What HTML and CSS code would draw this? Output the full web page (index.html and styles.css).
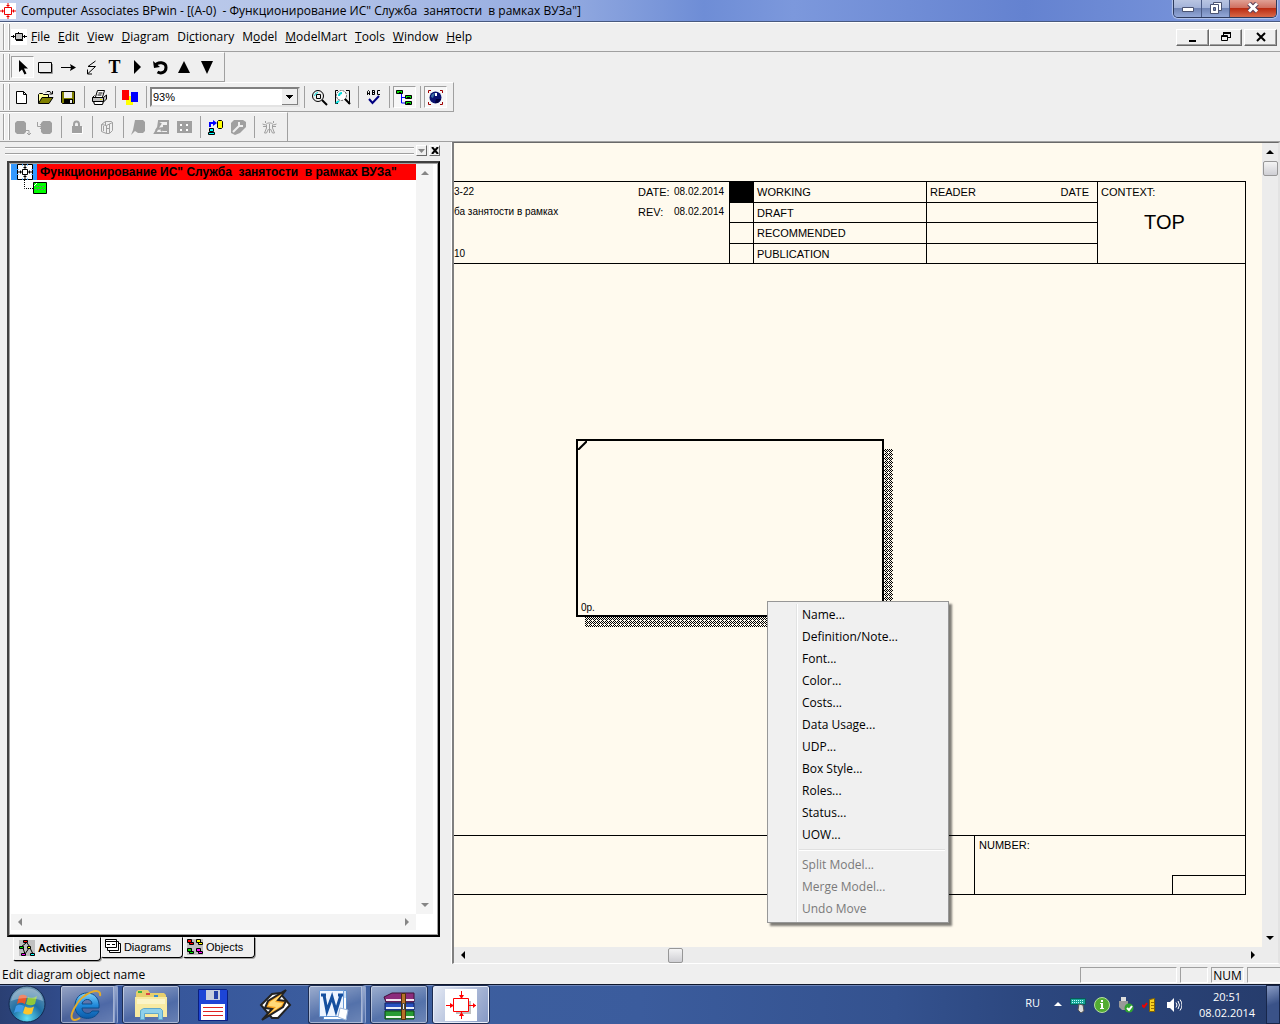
FILE: index.html
```html
<!DOCTYPE html>
<html lang="ru">
<head>
    <meta charset="UTF-8">
    <meta name="viewport" content="width=device-width, initial-scale=1.0">
    <title>Computer Associates BPwin</title>
    <link rel="stylesheet" href="styles.css">
</head>
<body>
    <header class="titlebar">
        <svg class="app-icon" width="16" height="16" viewBox="0 0 16 16"><path fill="#fff" d="M0 0h16v16H0z"/><path fill="none" stroke="#e00" d="M4.500 4.500h7v7h-7zM8 0v4M8 12v4M0 8h4M12 8h4M6.500 2.500h3M6.500 13.500h3M2.500 6.500v3M13.500 6.500v3"/></svg>
        <h1 class="title">Computer Associates BPwin - [(A-0)  - Функционирование ИС" Служба  занятости  в рамках ВУЗа"]</h1>
        <div class="win-buttons">
            <button class="win-btn" aria-label="Minimize"><svg width="14" height="12" viewBox="0 0 14 12"><path fill="#fff" stroke="#4b5473" d="M1.500 5.500h11v4h-11z"/></svg></button>
            <button class="win-btn" aria-label="Restore"><svg width="14" height="12" viewBox="0 0 14 12"><path fill="#fff" stroke="#4b5473" d="M4.500.500h8v8h-8z"/><path fill="#fff" stroke="#4b5473" d="M1.500 2.500h8v9h-8z"/><path fill="#7386b5" stroke="#4b5473" d="M4.500 5.500h2v3h-2z"/></svg></button>
            <button class="win-btn close" aria-label="Close"><svg width="14" height="12" viewBox="0 0 14 12"><path fill="none" stroke="#59405a" stroke-width="5" d="M3 1.500l8 8M11 1.500l-8 8"/><path fill="none" stroke="#fff" stroke-width="3" d="M3 1.500l8 8M11 1.500l-8 8"/></svg></button>
        </div>
    </header>

    <nav class="menubar">
        <span class="grip"></span>
        <svg class="doc-icon" width="16" height="16" viewBox="0 0 16 16"><path fill="#fff" d="M0 0h16v16H0z"/><path fill="#c0c0c0" stroke="#000" d="M4.500 4.500h7v6h-7z"/><path stroke="#000" fill="none" d="M0 7.500h4M12 7.500h4M5 11.500h7M2.500 6v3M13.500 6v3M7.500 3v2"/></svg>
        <a href="#"><u>F</u>ile</a>
        <a href="#"><u>E</u>dit</a>
        <a href="#"><u>V</u>iew</a>
        <a href="#"><u>D</u>iagram</a>
        <a href="#">Di<u>c</u>tionary</a>
        <a href="#">M<u>o</u>del</a>
        <a href="#"><u>M</u>odelMart</a>
        <a href="#"><u>T</u>ools</a>
        <a href="#"><u>W</u>indow</a>
        <a href="#"><u>H</u>elp</a>
        <div class="mdi-buttons">
            <button aria-label="Minimize document"><svg width="12" height="12" viewBox="0 0 12 12"><path d="M2 9h7v2H2z"/></svg></button>
            <button aria-label="Restore document"><svg width="12" height="12" viewBox="0 0 12 12"><path fill="none" stroke="#000" d="M4 1.500h7M3.500 4V1M10.500 1v6M3 2.500h8M8 6.500h3M1.500 4.500h6v5h-6zM1 5.500h7"/></svg></button>
            <button class="gap" aria-label="Close document"><svg width="12" height="12" viewBox="0 0 12 12"><path fill="none" stroke="#000" stroke-width="2" d="M2 2l8 8M10 2l-8 8"/></svg></button>
        </div>
    </nav>

    <div class="toolbars">
        <div class="toolbar">
            <span class="grip"></span>
            <button class="tool pressed" aria-label="Pointer"><svg width="17" height="17" viewBox="0 0 17 17"><path d="M5 1v12l3-2.500 2.500 5 2-1-2.500-5h4z"/></svg></button>
            <button class="tool" aria-label="Activity box"><svg width="17" height="17" viewBox="0 0 17 17"><path fill="none" stroke="#999" d="M3 14.500h12.500V5"/><path fill="none" stroke="#000" d="M1.500 3.500h13v10h-13z"/></svg></button>
            <button class="tool" aria-label="Arrow"><svg width="17" height="17" viewBox="0 0 17 17"><path stroke="#000" d="M1 8.500h12"/><path d="M10 5l6 3.500-6 3.500 1-3.500z"/></svg></button>
            <button class="tool" aria-label="Squiggle"><svg width="17" height="17" viewBox="0 0 17 17"><path fill="none" stroke="#000" d="M12.500 2L5 7.500h7.500L5 14.500M4.500 10.500v4.500H9"/></svg></button>
            <button class="tool text-tool" aria-label="Text">T</button>
            <button class="tool" aria-label="Go to"><svg width="17" height="17" viewBox="0 0 17 17"><path d="M5 1v14l7-7z"/></svg></button>
            <button class="tool" aria-label="Sibling diagram"><svg width="17" height="17" viewBox="0 0 17 17"><path fill="none" stroke="#000" stroke-width="3" d="M3 6.500C6 2 14 3 14 8.500c0 5-5 6.500-8.500 4.500"/><path d="M1 2l1 7 6-1z"/></svg></button>
            <button class="tool" aria-label="Go to parent"><svg width="17" height="17" viewBox="0 0 17 17"><path d="M9 2l6 12H3z"/></svg></button>
            <button class="tool" aria-label="Go to child"><svg width="17" height="17" viewBox="0 0 17 17"><path d="M3 2h12L9 15z"/></svg></button>
        </div>

        <div class="toolbar">
            <span class="grip"></span>
            <button class="tool" aria-label="New"><svg width="17" height="17" viewBox="0 0 17 17"><path fill="#fff" stroke="#000" d="M2.500 2.500h7l3 3v9h-10zM9.500 2.500v3h3"/></svg></button>
            <button class="tool" aria-label="Open"><svg width="17" height="17" viewBox="0 0 17 17"><path fill="#ff9" stroke="#000" d="M1.500 14V5.500l1-1h3l1 1h5v3"/><path fill="#808000" stroke="#000" d="M1.500 14.500l3.500-6h11l-4 6z"/><path fill="none" stroke="#000" d="M9 3.500l1-1h3l1.500 2M15.500 2v3h-3"/></svg></button>
            <button class="tool" aria-label="Save"><svg width="17" height="17" viewBox="0 0 17 17"><path fill="#808000" stroke="#000" d="M1.500 2.500h13v12h-12l-1-1z"/><path fill="#efefef" d="M4 3h8v6H4z"/><path d="M4 10h9v5H4z"/><path fill="#efefef" d="M10 11h2v3h-2z"/></svg></button>
            <span class="sep"></span>
            <button class="tool" aria-label="Print"><svg width="17" height="17" viewBox="0 0 17 17"><path fill="#fff" stroke="#000" d="M4.500 8l2-6.500h7L11.500 8"/><path fill="none" stroke="#000" d="M7.500 4h4M6.500 6h4"/><path fill="#c0c0c0" stroke="#000" d="M1.500 8.500l2-2M1.500 8.500h11v4h-11zM12.500 8.500l3-2.500v4l-3 3M2.500 12.500l1 3h8l1-3"/><path fill="#fff" d="M4 13h7v2H4z"/><path fill="#dd0" d="M9 10h2v1H9z"/></svg></button>
            <span class="sep"></span>
            <button class="tool" aria-label="Colors"><svg width="17" height="17" viewBox="0 0 17 17"><path fill="#ff0" d="M4 7h7v9H4z"/><path fill="#f00" d="M0 1h7v10H0z"/><path fill="#00f" d="M9 3h7v10H9z"/></svg></button>
            <span class="sep"></span>
            <select class="zoom" aria-label="Zoom"><option>93%</option></select>
            <span class="sep"></span>
            <button class="tool" aria-label="Zoom in"><svg width="17" height="17" viewBox="0 0 17 17"><circle cx="7" cy="7" r="5.500" fill="#efefef" stroke="#000"/><path fill="none" stroke="#0dd" d="M3.500 7A4 4 0 0 1 7 3.500"/><path fill="none" stroke="#000" d="M5.500 5.500h4v4h-4z"/><path stroke="#000" stroke-width="2" d="M11 11l5 5"/></svg></button>
            <button class="tool" aria-label="Fit to window"><svg width="17" height="17" viewBox="0 0 17 17"><path fill="none" stroke="#000" d="M4 1.500H1.500v13H4M12 1.500h3.500v13H14"/><circle cx="7.500" cy="6.500" r="5" fill="#fff" stroke="#555" stroke-dasharray="2 1"/><path fill="none" stroke="#0dd" stroke-width="2" d="M5 7A3 3 0 0 1 8 4M5 12l-3 2"/><path stroke="#000" stroke-width="2" d="M11 10l5 5"/></svg></button>
            <span class="sep"></span>
            <button class="tool" aria-label="Spelling"><svg width="17" height="17" viewBox="0 0 17 17"><path fill="none" stroke="#000" d="M2.500 6V2.500L3.500 1.500l1 1V6M2 4.500h3M7.500 1v5M7 1.500h2.500v4H7M7 3.500h2M15 1.500h-2.500v4H15"/><path fill="none" stroke="#000080" stroke-width="2" d="M4 10l3.500 4L14 7"/></svg></button>
            <span class="sep"></span>
            <button class="tool pressed" aria-label="Model explorer"><svg width="17" height="17" viewBox="0 0 17 17"><path fill="none" stroke="#00f" d="M5.500 5v9h5M5.500 8.500h4"/><path fill="#0d0" stroke="#000" d="M.500 1.500h6v3h-6zM9.500 6.500h6v3h-6zM9.500 12.500h6v3h-6z"/><path stroke="#000" d="M3 3.500h2M11 8.500h3M11 14.500h3"/></svg></button>
            <span class="sep"></span>
            <button class="tool pressed" aria-label="ModelMart"><svg width="17" height="17" viewBox="0 0 17 17"><path fill="none" stroke="#a00000" d="M1.500 4V1.500H4M13 1.500h2.500V4M1.500 13v2.500H4M13 15.500h2.500V13"/><circle cx="8.500" cy="8.500" r="6" fill="#0a1270"/><path fill="#3b6ea5" d="M4 8c0-3 2-4 4-4L6 9z"/><path fill="#fff" d="M8 4h2v3H8z"/><path fill="#000040" d="M9 10h5l-3 4H8z"/></svg></button>
        </div>

        <div class="toolbar">
            <span class="grip"></span>
            <button class="tool" disabled aria-label="Check out"><svg width="17" height="17" viewBox="0 0 17 17"><path fill="#a0a0a0" d="M3 2h7l2 2v9l-2 2H3l-2-2V4z"/><path fill="none" stroke="#a0a0a0" d="M11 11.500h4v4M13 14l2 2 2-2"/></svg></button>
            <button class="tool" disabled aria-label="Check in"><svg width="17" height="17" viewBox="0 0 17 17"><path fill="#a0a0a0" d="M6 2h7l2 2v9l-2 2H6l-2-2V4z"/><path fill="none" stroke="#a0a0a0" d="M.500 3v4.500H5M3 5l2 2.500L3 10"/></svg></button>
            <span class="sep"></span>
            <button class="tool" disabled aria-label="Lock"><svg width="17" height="17" viewBox="0 0 17 17"><path fill="none" stroke="#fff" d="M4 14.500h10.500V8"/><path fill="none" stroke="#a0a0a0" stroke-width="2" d="M6 8V5.500c0-4 5-4 5 0V8"/><path fill="#a0a0a0" d="M4 7h10v7H4z"/></svg></button>
            <span class="sep"></span>
            <button class="tool" disabled aria-label="Versions"><svg width="17" height="17" viewBox="0 0 17 17"><path fill="none" stroke="#a0a0a0" d="M2.500 5.500l4-3h6l1 1v8l-3 3h-3l-5-2zM6.500 2.500v4M2.500 5.500l5 1v8M7.500 6.500l6-3M10.500 5v9M4.500 7v5M8 9.500h2"/></svg></button>
            <span class="sep"></span>
            <button class="tool" disabled aria-label="Refresh"><svg width="17" height="17" viewBox="0 0 17 17"><path fill="#a0a0a0" d="M5 1h8l2 2v9l-2 2H8l-3-2-4 4 2-5z"/></svg></button>
            <button class="tool" disabled aria-label="Review"><svg width="17" height="17" viewBox="0 0 17 17"><path fill="none" stroke="#a0a0a0" stroke-width="2" d="M6 2h9v12H2l3-5zM8 4l-4 6 7-1-3 3"/><path fill="#a0a0a0" d="M10 6h4v6h-4z"/></svg></button>
            <button class="tool" disabled aria-label="Library"><svg width="17" height="17" viewBox="0 0 17 17"><path fill="#a0a0a0" d="M1 2h15v12H1z"/><path fill="#fff" d="M4 5h2v2H4zM10 5h2v2h-2zM4 10h2v2H4zM10 10h2v2h-2z"/></svg></button>
            <span class="sep"></span>
            <button class="tool" aria-label="Connect"><svg width="17" height="17" viewBox="0 0 17 17"><path fill="none" stroke="#00f" stroke-width="2" d="M3 8V4h4"/><path fill="#00f" d="M6 1l4 3-4 3z"/><path fill="#ff0" stroke="#000" d="M10.500 2.500l1-1h3l1 1v6l-1 1h-3l-1-1z"/><path fill="#0ff" stroke="#000" d="M2.500 9.500h4v3h-4zM1.500 13.500h6v2h-6z"/></svg></button>
            <button class="tool" disabled aria-label="Tools"><svg width="17" height="17" viewBox="0 0 17 17"><path fill="#a0a0a0" d="M4 1h9l3 2v5l-6 6-5 2-4-2V4z"/><path fill="none" stroke="#efefef" stroke-width="2" d="M3 13l7-7M9 3v4h4"/></svg></button>
            <span class="sep"></span>
            <button class="tool" disabled aria-label="Users"><svg width="17" height="17" viewBox="0 0 17 17"><path fill="none" stroke="#a0a0a0" d="M1.500 5l3 1 2-2h4l2 2 3-1M5.500 6v3l-2 5h2l2-4M11.500 6v3l2 5h-2l-2-4M8.500 5v9M4.500 2v2M12.500 2v2M2 7.500h3M12 7.500h3"/></svg></button>
        </div>
    </div>

    <main class="workspace">
        <aside class="explorer">
            <div class="dock-bar">
                <span class="dock-grip"></span>
                <button class="dock-btn" disabled aria-label="Collapse"><svg width="7" height="4" viewBox="0 0 7 4"><path fill="#888" d="M0 0h7L3.500 4z"/></svg></button>
                <button class="dock-btn" aria-label="Close panel"><svg width="8" height="7" viewBox="0 0 8 7"><path fill="none" stroke="#000" stroke-width="2" d="M1 0l6 7M7 0L1 7"/></svg></button>
            </div>
            <div class="tree-frame">
                <div class="tree">
                    <div class="tree-root">
                        <span class="tree-sel"><svg width="16" height="16" viewBox="0 0 16 16"><path fill="#fff" stroke="#000" d="M.500.500h15v15H.500z"/><path fill="none" stroke="#3399ff" stroke-width="2" d="M5 .500h1M10 .500h1M5 15.500h1M10 15.500h1M.500 5v1M.500 10v1M15.500 5v1M15.500 10v1"/><path fill="none" stroke="#000" d="M5.500 5.500h5v5h-5zM8 0v5M8 11v5M0 8h5M11 8h5M6.500 3.500h3M6.500 12.500h3M3.500 6.500v3M12.500 6.500v3"/></svg></span>
                        <span class="tree-label">Функционирование ИС" Служба  занятости  в рамках ВУЗа"</span>
                    </div>
                    <svg class="tree-child" width="34" height="16" viewBox="0 0 34 16"><path fill="none" stroke="#000" stroke-dasharray="1 1" d="M2.500 0v8.500H11"/><path fill="#0f0" stroke="#000" d="M11.500 2.500h13v11h-13z"/><path stroke="#7a7a7a" stroke-dasharray="2 1" d="M14 6.500h9M13 9.500h10"/><path stroke="#fff" d="M12 6l3-3"/></svg>
                </div>
                <div class="scroll-v faded"><svg width="8" height="4" viewBox="0 0 8 4"><path d="M4 0l4 4H0z"/></svg><svg width="8" height="4" viewBox="0 0 8 4"><path d="M0 0h8L4 4z"/></svg></div>
                <div class="scroll-h faded"><svg width="4" height="8" viewBox="0 0 4 8"><path d="M4 0v8L0 4z"/></svg><svg width="4" height="8" viewBox="0 0 4 8"><path d="M0 0l4 4-4 4z"/></svg></div>
            </div>
            <div class="tabs">
                <button class="tab active"><svg width="16" height="16" viewBox="0 0 16 16"><path fill="#c0c0c0" d="M0 0h16v16H0z"/><path fill="none" stroke="#000" d="M7 3L2 7M8 3l3 4M4 8l2 6M10 8l-4 6M11 8l3 6"/><path fill="#f00" stroke="#000" d="M4.500.500h4v2h-4z"/><path fill="#0d0" stroke="#000" d="M.500 6.500h4v2h-4z"/><path fill="#ff0" stroke="#000" d="M8.500 6.500h3v2h-3z"/><path fill="#f0f" stroke="#000" d="M2.500 13.500h4v2h-4z"/><path fill="#0ff" stroke="#000" d="M11.500 13.500h4v2h-4z"/></svg>Activities</button>
                <button class="tab"><svg width="16" height="16" viewBox="0 0 16 16"><path fill="#fff" stroke="#000" d="M4.500 4.500h11v9h-11z"/><path fill="#fff" stroke="#000" d="M2.500 2.500h11v9h-11z"/><path fill="#fff" stroke="#000" d="M.500.500h11v8H.500z"/><path stroke="#000" d="M1 2.500h11M2 5.500h3M7 5.500h3"/></svg>Diagrams</button>
                <button class="tab"><svg width="16" height="16" viewBox="0 0 16 16"><path fill="#c0c0c0" d="M0 0h16v16H0z"/><path fill="#f00" stroke="#000" d="M.500.500h4v3h-4zM2.500 3.500h4v2h-4z"/><path fill="#ff0" stroke="#000" d="M9.500.500h4v3h-4zM11.500 3.500h4v2h-4z"/><path fill="#0d0" stroke="#000" d="M.500 9.500h4v3h-4zM2.500 12.500h4v2h-4z"/><path fill="#f0f" stroke="#000" d="M9.500 9.500h4v3h-4zM11.500 12.500h4v2h-4z"/></svg>Objects</button>
            </div>
        </aside>

        <section class="document">
            <div class="canvas">
                <div class="sheet">
                    <div class="sheet-head">
                        <div class="head-info">
                            <span class="val">3-22</span><span>DATE:</span><span class="val">08.02.2014</span>
                            <span class="val">ба занятости в рамках</span><span>REV:</span><span class="val">08.02.2014</span>
                            <span class="last val">10</span>
                        </div>
                        <div class="status">
                            <i class="on"></i><span>WORKING</span>
                            <i></i><span>DRAFT</span>
                            <i></i><span>RECOMMENDED</span>
                            <i></i><span>PUBLICATION</span>
                        </div>
                        <div class="readers">
                            <div><span>READER</span><span>DATE</span></div>
                            <div></div>
                            <div></div>
                            <div></div>
                        </div>
                        <div class="context">CONTEXT:<strong>TOP</strong></div>
                    </div>
                    <div class="sheet-body"></div>
                    <div class="sheet-foot">
                        <div class="foot-title"></div>
                        <div class="foot-number">NUMBER:<i></i></div>
                    </div>
                </div>
                <svg class="activity-shadow" width="308" height="178" shape-rendering="crispEdges"><defs><pattern id="dots" width="4" height="4" patternUnits="userSpaceOnUse"><path d="M0 0h1v1H0zM2 0h1v1H2zM1 1h1v1H1zM3 1h1v1H3zM0 2h1v1H0zM2 2h1v1H2zM1 3h1v1H1z"/></pattern></defs><rect width="308" height="178" fill="url(#dots)"/></svg>
                <div class="activity">
                    <svg width="9" height="9" viewBox="0 0 9 9"><path stroke="#000" stroke-width="2" d="M0 9l9-9"/></svg>
                    <span class="val">0р.</span>
                </div>
            </div>
            <div class="scroll-v"><svg width="8" height="4" viewBox="0 0 8 4"><path d="M4 0l4 4H0z"/></svg><i class="thumb"></i><svg width="8" height="4" viewBox="0 0 8 4"><path d="M0 0h8L4 4z"/></svg></div>
            <div class="scroll-h"><svg width="4" height="8" viewBox="0 0 4 8"><path d="M4 0v8L0 4z"/></svg><i class="thumb"></i><svg width="4" height="8" viewBox="0 0 4 8"><path d="M0 0l4 4-4 4z"/></svg></div>
        </section>
    </main>

    <div class="context-menu">
        <button>Name...</button>
        <button>Definition/Note...</button>
        <button>Font...</button>
        <button>Color...</button>
        <button>Costs...</button>
        <button>Data Usage...</button>
        <button>UDP...</button>
        <button>Box Style...</button>
        <button>Roles...</button>
        <button>Status...</button>
        <button>UOW...</button>
        <hr>
        <button disabled>Split Model...</button>
        <button disabled>Merge Model...</button>
        <button disabled>Undo Move</button>
    </div>

    <footer class="statusbar">
        <span class="message">Edit diagram object name</span>
        <span class="pane wide"></span>
        <span class="pane"></span>
        <span class="pane num">NUM</span>
        <span class="pane last"></span>
    </footer>

    <div class="taskbar">
        <button class="start" aria-label="Start"><svg width="40" height="40" viewBox="0 0 40 40"><defs><radialGradient id="orb" cx="50%" cy="90%" r="85%"><stop offset="0" stop-color="#5fe0f5"/><stop offset=".5" stop-color="#1d6fa5"/><stop offset="1" stop-color="#6a93b0"/></radialGradient></defs><circle cx="20" cy="19" r="18" fill="url(#orb)" stroke="#12284e"/><path fill="#e8562a" d="M12 11c3-2 5-1.500 8 0l-2 8c-3-1.500-5-2-8 0z"/><path fill="#8fc83c" d="M21 12c3 1.500 6 1 9-1l-2 8c-3 2-6 1.500-9 0z"/><path fill="#3f9be8" d="M9 21c3-2 5-1.500 8 0l-2 7c-2-1.500-5-2-8 0z"/><path fill="#fdc52c" d="M18 21.500c3 1.500 6 2 9 0l-2 7c-3 2-6 1-9-.500z"/><path fill="#fff" fill-opacity=".3" d="M4 16C6-1 34-1 36 16c-10-4-22-4-32 0z"/></svg></button>
        <button class="task stacked" aria-label="Internet Explorer"><svg width="34" height="34" viewBox="0 0 34 34"><defs><linearGradient id="ie" x2="0" y2="1"><stop offset="0" stop-color="#7cd0fa"/><stop offset=".5" stop-color="#1f87d8"/><stop offset="1" stop-color="#0b5aa8"/></linearGradient></defs><path fill="url(#ie)" stroke="#0b4c8c" fill-rule="evenodd" d="M18 5c8 0 13 6 12 15H13c0 6 8 7 10 3h7c-4 11-24 10-24-5C6 10 11 5 18 5zM13 16h10c0-6-9-6-10 0z"/><path fill="none" stroke="#e3ab2c" stroke-width="2" d="M31 8c2-10-17-4-25 11-7 12-2 16 5 11"/></svg></button>
        <button class="task" aria-label="Explorer"><svg width="34" height="34" viewBox="0 0 34 34"><path fill="#e7cf6d" d="M2 4l2-2h10l2 3h14l2 2v22H2z"/><path fill="#3eb33e" d="M4 3h4v2H4z"/><path fill="#d44" d="M12 5h4v2h-4z"/><path fill="#3a8ed0" d="M20 7h4v2h-4z"/><path fill="#f8eaa2" d="M1 9h32v20H1z"/><path fill="#fbf4c8" d="M3 11h28v5H3z"/><path fill="#8fd0ea" stroke="#5fa8cc" d="M6.500 31.500v-9l3-2h17l2 2v9h-4v-6h-14v6z"/></svg></button>
        <button class="task plain" aria-label="Floppy"><svg width="34" height="34" viewBox="0 0 34 34"><path fill="#1d45d6" stroke="#0a1f80" d="M2.500 1.500h28l1 1v30h-29z"/><path fill="#c8cede" d="M10 2h14v10H10z"/><path fill="#2540a8" d="M18 3h4v8h-4z"/><path fill="#fff" d="M5 16h24v16H5z"/><path stroke="#d22" d="M7 19.500h20M7 23.500h20M7 27.500h20"/></svg></button>
        <button class="task plain" aria-label="Winamp"><svg width="34" height="34" viewBox="0 0 34 34"><path fill="#fff" stroke="#222" stroke-width="2" d="M3 17L14 6l8-1 10 12-12 13h-6z"/><path fill="#f6a01d" stroke="#222" stroke-width="2" d="M28 2L10 13l-3 7 7 1L4 32l21-13 3-6-8-1z"/><path fill="#ffd978" d="M24 6L12 14l-2 4 8 1-7 7 12-8 2-3-8-1z"/></svg></button>
        <button class="task stacked" aria-label="Word"><svg width="34" height="34" viewBox="0 0 34 34"><path fill="#fff" stroke="#5b8bc8" d="M6.500 2.500h23v29h-23z"/><path fill="#cfe0f5" d="M8 3h21v7H8z"/><path fill="#eef5ff" stroke="#6a9bd8" d="M2.500 2.500h24v26h-24z"/><path fill="none" stroke="#15509f" stroke-width="3" d="M4 7h5M7 7l3 16L15 9l4 14 5-16M21 7h5"/><path fill="#fff" stroke="#9bb4d8" d="M23 20l8 2-2 10-8-3z"/></svg></button>
        <button class="task" aria-label="WinRAR"><svg width="34" height="34" viewBox="0 0 34 34"><path fill="#8c2c7c" stroke="#401038" d="M2 9l8-4h22v9H4z"/><path fill="#f4e6f0" d="M4 11h28v2H4z"/><path fill="#2850c0" stroke="#102060" d="M3 15h29v7H3z"/><path fill="#e8ecf8" d="M4 19h28v2H4z"/><path fill="#289c34" stroke="#0c4814" d="M3 23h29v8H3z"/><path fill="#e8f8e8" d="M4 28h28v2H4z"/><path fill="#b87028" stroke="#50300c" d="M19.500 5.500h4v26h-4z"/><path fill="#eee" stroke="#444" d="M20.500 15.500h2v6h-2z"/></svg></button>
        <button class="task current" aria-label="BPwin"><svg width="34" height="34" viewBox="0 0 34 34"><path fill="#fff" d="M1 1h32v32H1z"/><path fill="#c0c0c0" d="M12 13h15v13H12z"/><path fill="#fff" stroke="#f00" d="M9.500 10.500h15v13h-15z"/><path stroke="#f00" d="M17.500 3v7M17.500 24v7M2 17.500h7M25 17.500h7"/><path fill="#f00" d="M15 7h5l-2.500 4zM15 28h5l-2.500-4zM6 15v5l4-2.500zM29 15v5l3-2.500z"/></svg></button>

        <div class="tray">
            <span class="lang">RU</span>
            <svg width="8" height="5" viewBox="0 0 8 5"><path fill="#fff" d="M4 0l4 4H0z"/></svg>
            <svg width="16" height="16" viewBox="0 0 16 16"><path fill="#16a596" stroke="#0a5a58" d="M.500 1.500h15v6H.500z"/><path stroke="#bff" stroke-dasharray="1 1" d="M2 3.500h12M2 5.500h12"/><path fill="#ddd" stroke="#555" d="M9 7l4 1 1 6-3 2-3-3z"/></svg>
            <svg width="16" height="16" viewBox="0 0 16 16"><circle cx="8" cy="8" r="7.500" fill="#52ac32" stroke="#b8e0a0"/><path fill="#fff" d="M7 3h2v2H7zM6 6h3v5h1v1H6v-1h1V7H6z"/></svg>
            <svg width="16" height="16" viewBox="0 0 16 16"><path fill="#ddd" d="M3 0h5v4H3z"/><path fill="#999" d="M1 4h9v6l-3 3H4l-3-3z"/><circle cx="11" cy="11" r="4.500" fill="#2fa52f"/><path fill="none" stroke="#fff" stroke-width="2" d="M9 11l2 2 3-4"/></svg>
            <svg width="16" height="16" viewBox="0 0 16 16"><path fill="#f8d020" stroke="#806000" d="M7.500 2.500l5-1v13h-5z"/><path fill="none" stroke="#a07000" d="M9 5.500h3M9 8.500h3M9 11.500h3"/><path fill="none" stroke="#e00" stroke-width="2" d="M0 8l2 2 3-4"/></svg>
            <svg width="16" height="16" viewBox="0 0 16 16"><path fill="#fff" d="M1 5h3l4-4v14l-4-4H1z"/><path fill="none" stroke="#fff" d="M10 5.500q2 2.500 0 5M12 4q3 4 0 8M14 2.500q4 5.500 0 11"/></svg>
            <div class="clock"><time>20:51</time><time>08.02.2014</time></div>
            <button class="show-desktop" aria-label="Show desktop"></button>
        </div>
    </div>
</body>
</html>
```
FILE: styles.css
```css
* {
    margin: 0;
    padding: 0;
    box-sizing: border-box;
}
body {
    font-family: "Open Sans", "Noto Sans", sans-serif;
    font-size: 12px;
    line-height: 16px;
    color: #000;
    background-color: #efefef;
    height: 100vh;
    display: flex;
    flex-direction: column;
    overflow: hidden;
    position: relative;
}
button {
    font: inherit;
    color: inherit;
    border: none;
    background: none;
}
svg {
    display: block;
    flex: none;
}
i {
    display: block;
}

/* title bar */
.titlebar {
    height: 22px;
    display: flex;
    align-items: flex-start;
    background: linear-gradient(90deg, #c3d0ec 0%, #b3c3e8 25%, #93aae0 44%, #6e8dd6 55%, #7c98dc 62%, #6482d0 80%, #7f9ade 100%);
    border-bottom: 1px solid #48597f;
    flex: none;
}
.app-icon {
    margin-top: 3px;
}
.title {
    flex: 1;
    font-size: 12px;
    font-weight: normal;
    white-space: pre;
    margin: 3px 0 0 5px;
}
.win-buttons {
    display: flex;
    height: 18px;
    margin-right: 3px;
    border: 1px solid #2d3a5c;
    border-top: none;
    border-radius: 0 0 5px 5px;
    overflow: hidden;
    box-shadow: 0 0 1px 1px #b9c8ec;
}
.win-btn {
    width: 28px;
    display: flex;
    justify-content: center;
    padding-top: 2px;
    background: linear-gradient(#b9c5e2 0%, #a3b3d9 45%, #7185b5 50%, #93a8d8 100%);
    border-right: 1px solid #4a5a85;
}
.win-btn.close {
    width: 46px;
    background: linear-gradient(#e0a094 0%, #d07060 45%, #bb2c12 50%, #d86848 100%);
    border-right: none;
}

/* menu */
.menubar {
    display: flex;
    align-items: center;
    height: 30px;
    border-top: 1px solid #fff;
    border-bottom: 1px solid #a0a0a0;
    padding-left: 3px;
    gap: 8px;
    flex: none;
}
.menubar a {
    color: #000;
    text-decoration: none;
}
.grip {
    width: 7px;
    align-self: stretch;
    margin: 1px 1px 1px 0;
    border: 1px solid #a0a0a0;
    border-width: 0 1px;
    box-shadow: inset 1px 0 #fff, inset -1px 0 #fff;
    flex: none;
}
.doc-icon {
    margin: 0 -4px 0 -8px;
}
.mdi-buttons {
    display: flex;
    margin: 0 3px 0 auto;
}
.mdi-buttons button {
    width: 33px;
    height: 17px;
    display: flex;
    align-items: center;
    justify-content: center;
    border: 1px solid;
    border-color: #fff #696969 #696969 #fff;
    box-shadow: inset -1px -1px #a0a0a0;
}
.mdi-buttons .gap {
    margin-left: 2px;
}

/* toolbars */
.toolbars {
    display: flex;
    flex-direction: column;
    align-items: flex-start;
    border-bottom: 1px solid #a0a0a0;
    flex: none;
}
.toolbar {
    display: flex;
    align-items: center;
    height: 30px;
    padding: 0 6px 0 3px;
    border-top: 1px solid #fff;
    border-right: 1px solid #a0a0a0;
    border-bottom: 1px solid #a0a0a0;
}
.toolbar:last-child {
    height: 29px;
    border-bottom: none;
}
.tool {
    width: 23px;
    height: 22px;
    display: flex;
    align-items: center;
    justify-content: center;
}
.tool.pressed {
    background-color: #f7f7f7;
    border: 1px solid;
    border-color: #a0a0a0 #fff #fff #a0a0a0;
}
.text-tool {
    font-family: "Liberation Serif", serif;
    font-size: 18px;
    font-weight: bold;
}
.sep {
    width: 1px;
    height: 22px;
    margin: 0 3px 0 4px;
    background-color: #a0a0a0;
}
.zoom {
    width: 150px;
    height: 20px;
    appearance: none;
    border: 2px solid;
    border-color: #808080 #e3e3e3 #e3e3e3 #808080;
    border-radius: 0;
    padding-left: 1px;
    font: 11px "Liberation Sans", sans-serif;
    color: #000;
    background: linear-gradient(#000, #000) no-repeat right 5px top 6px / 7px 1px,
        linear-gradient(#000, #000) no-repeat right 6px top 7px / 5px 1px,
        linear-gradient(#000, #000) no-repeat right 7px top 8px / 3px 1px,
        linear-gradient(#000, #000) no-repeat right 8px top 9px / 1px 1px,
        linear-gradient(#808080, #808080) no-repeat right 0 bottom 0 / 16px 1px,
        linear-gradient(#808080, #808080) no-repeat right 0 top 0 / 1px 16px,
        linear-gradient(#efefef, #efefef) no-repeat right 0 top 0 / 16px 16px,
        #fff;
}

/* work area */
.workspace {
    flex: 1;
    min-height: 0;
    display: flex;
}
.explorer {
    width: 452px;
    display: flex;
    flex-direction: column;
    padding: 3px 11px 3px 5px;
    border-right: 1px solid #fff;
    flex: none;
}
.dock-bar {
    display: flex;
    align-items: center;
    gap: 2px;
    height: 11px;
    margin-bottom: 5px;
}
.dock-grip {
    flex: 1;
    height: 7px;
    border: 1px solid #a0a0a0;
    border-width: 1px 0;
    box-shadow: inset 0 1px #fff, 0 1px #fff;
}
.dock-btn {
    width: 11px;
    height: 11px;
    display: flex;
    align-items: center;
    justify-content: center;
    border: 1px solid;
    border-color: #fff #696969 #696969 #fff;
}
.tree-frame {
    flex: 1;
    min-height: 0;
    margin-left: 2px;
    display: grid;
    grid-template-columns: 1fr 17px;
    grid-template-rows: 1fr 16px;
    background-color: #fff;
    border: 2px solid;
    border-color: #404040 #000 #000 #404040;
    outline: 1px solid #a0a0a0;
    outline-offset: -3px;
    padding: 1px 5px 5px 2px;
}
.tree-root {
    display: flex;
    height: 16px;
    background-color: #f00;
}
.tree-sel {
    width: 26px;
    padding-left: 6px;
    background-color: #3399ff;
}
.tree-label {
    font: bold 12px/16px "Liberation Sans", sans-serif;
    white-space: pre;
    padding-left: 3px;
}
.tree-child {
    margin-left: 11px;
}
.scroll-v,
.scroll-h {
    display: flex;
    align-items: center;
    justify-content: space-between;
    background-color: #ececec;
}
.scroll-v {
    flex-direction: column;
    padding: 7px 0;
}
.scroll-h {
    padding: 0 7px;
}
.faded {
    background-color: #f4f4f4;
}
.faded svg {
    opacity: .45;
}
.tabs {
    display: flex;
    align-items: flex-start;
    padding-left: 8px;
    font: 11px "Liberation Sans", sans-serif;
}
.tab {
    display: flex;
    align-items: center;
    gap: 3px;
    height: 21px;
    padding: 0 11px 2px 3px;
    border: 1px solid;
    border-color: transparent #000 #000 #fff;
    border-radius: 0 0 4px 2px;
    box-shadow: 1px 1px #a0a0a0;
}
.tab.active {
    height: 24px;
    font-weight: bold;
    padding: 0 13px 2px 5px;
}

.document {
    flex: 1;
    min-width: 0;
    display: grid;
    grid-template-columns: minmax(0, 1fr) 16px;
    grid-template-rows: minmax(0, 1fr) 16px;
    background-color: #ececec;
    border: 1px solid;
    border-color: #696969 #e3e3e3 #fff #808080;
    border-left-width: 2px;
    border-right-width: 2px;
}
.document .scroll-v {
    justify-content: flex-start;
}
.document .scroll-v svg:last-child {
    margin-top: auto;
}
.thumb {
    width: 15px;
    height: 15px;
    border: 1px solid #979797;
    border-radius: 2px;
    background: linear-gradient(#f4f4f4, #cfcfd4);
}
.scroll-v .thumb {
    margin-top: 7px;
}
.scroll-h .thumb {
    margin-right: 366px;
}
.canvas {
    position: relative;
    display: flex;
    overflow: hidden;
    background-color: #fffaee;
    font: 11px/14px "Liberation Sans", sans-serif;
}
.canvas .val {
    font-size: 10px;
}
.sheet {
    flex: 1;
    min-width: 0;
    display: flex;
    flex-direction: column;
    margin: 38px 16px 52px 0;
    border: 1px solid #000;
    border-left: none;
}
.sheet-head {
    display: flex;
    height: 82px;
    border-bottom: 1px solid #000;
}
.head-info {
    flex: 1;
    display: grid;
    grid-template-columns: 1fr 36px 55px;
    grid-template-rows: 20px 20px 1fr;
    align-items: center;
}
.head-info .last {
    align-self: end;
    margin-bottom: 2px;
}
.status {
    display: grid;
    grid-template-columns: 24px 173px;
    grid-template-rows: 21px 20px 21px 1fr;
}
.status i,
.status span {
    border-left: 1px solid #000;
    border-bottom: 1px solid #000;
    padding: 3px 3px 0;
}
.status .on {
    background-color: #000;
}
.readers {
    width: 171px;
    display: grid;
    grid-template-rows: 21px 20px 21px 1fr;
    border-left: 1px solid #000;
}
.readers div {
    display: flex;
    justify-content: space-between;
    padding: 3px 8px 0 3px;
    border-bottom: 1px solid #000;
}
.status > :nth-last-child(-n+2),
.readers div:last-child {
    border-bottom: none;
}
.context {
    width: 148px;
    padding: 3px;
    border-left: 1px solid #000;
}
.context strong {
    display: block;
    font-size: 20px;
    line-height: 26px;
    font-weight: normal;
    text-align: center;
    padding: 10px 14px 0 0;
}
.sheet-body {
    flex: 1;
}
.sheet-foot {
    display: flex;
    height: 59px;
    border-top: 1px solid #000;
}
.foot-title {
    flex: 1;
}
.foot-number {
    width: 271px;
    display: flex;
    justify-content: space-between;
    padding: 2px 0 0 4px;
    border-left: 1px solid #000;
}
.foot-number i {
    width: 73px;
    height: 19px;
    align-self: flex-end;
    border: 1px solid #000;
    border-width: 1px 0 0 1px;
}

/* activity box on the diagram */
.activity {
    position: absolute;
    left: 122px;
    top: 296px;
    width: 308px;
    height: 178px;
    display: flex;
    flex-direction: column;
    justify-content: space-between;
    border: 2px solid #000;
    background-color: #fffaee;
}
.activity-shadow {
    position: absolute;
    left: 131px;
    top: 306px;
}
.activity span {
    padding-left: 3px;
}

/* popup menu */
.context-menu {
    position: absolute;
    left: 767px;
    top: 601px;
    width: 182px;
    padding: 2px 3px;
    border: 1px solid #979797;
    background: linear-gradient(90deg, #e2e3e3 1px, #fff 1px, #fff 2px, transparent 2px) no-repeat 28px 2px, #f0f0f0;
    box-shadow: 3px 3px 2px rgba(0, 0, 0, .5);
}
.context-menu button {
    display: block;
    width: 100%;
    height: 22px;
    padding-left: 31px;
    text-align: left;
}
.context-menu button:disabled {
    color: #7a7a7a;
}
.context-menu hr {
    margin: 3px 0 3px 28px;
    border: none;
    border-top: 1px solid #e0e0e0;
    border-bottom: 1px solid #fff;
}

/* status bar */
.statusbar {
    display: flex;
    gap: 3px;
    height: 20px;
    padding: 3px 0 1px 2px;
    flex: none;
}
.message {
    flex: 1;
}
.pane {
    width: 28px;
    border: 1px solid;
    border-color: #a0a0a0 #fff #fff #a0a0a0;
    line-height: 15px;
}
.pane.wide {
    width: 97px;
}
.pane.num {
    width: 33px;
    text-align: center;
}
.pane.last {
    width: 33px;
    border-right: none;
}

/* taskbar */
.taskbar {
    display: flex;
    height: 40px;
    padding-left: 7px;
    color: #fff;
    border-top: 1px solid #10182c;
    background: linear-gradient(90deg, #2a3f73 0, #35549a 8%, #3d5f9f 30%, #3b5c9d 50%, #34528f 70%, #2c477f 80%, #263c6c 100%);
    box-shadow: inset 0 1px #6e86b8;
    flex: none;
}
.start {
    width: 40px;
    margin-right: 13px;
}
.task {
    width: 58px;
    display: flex;
    align-items: center;
    justify-content: center;
    margin-right: 4px;
    border: 1px solid #1c2c52;
    border-radius: 3px;
    background: linear-gradient(160deg, rgba(255, 255, 255, .5), rgba(255, 255, 255, .12) 60%, rgba(255, 255, 255, .25));
    box-shadow: inset 0 0 0 1px rgba(255, 255, 255, .45);
}
.task.stacked {
    border-right: 4px double #8fa3cf;
    padding-right: 4px;
}
.task.plain {
    background: none;
    border-color: transparent;
    box-shadow: none;
}
.task.current {
    background: linear-gradient(120deg, #e6ebf5, #a9b7d6 60%, #8497c4);
    box-shadow: inset 0 0 0 1px #e8edf8;
}
.tray {
    display: flex;
    align-items: center;
    gap: 8px;
    margin-left: auto;
}
.lang {
    font-size: 11px;
    margin: 0 6px 4px 0;
}
.clock {
    width: 62px;
    margin-left: 6px;
    font-size: 11px;
    text-align: center;
}
.clock time {
    display: block;
}
.show-desktop {
    width: 14px;
    align-self: stretch;
    border: 1px solid #17264a;
    background: linear-gradient(160deg, #8a9cc4, #3a5288 50%);
}
```
